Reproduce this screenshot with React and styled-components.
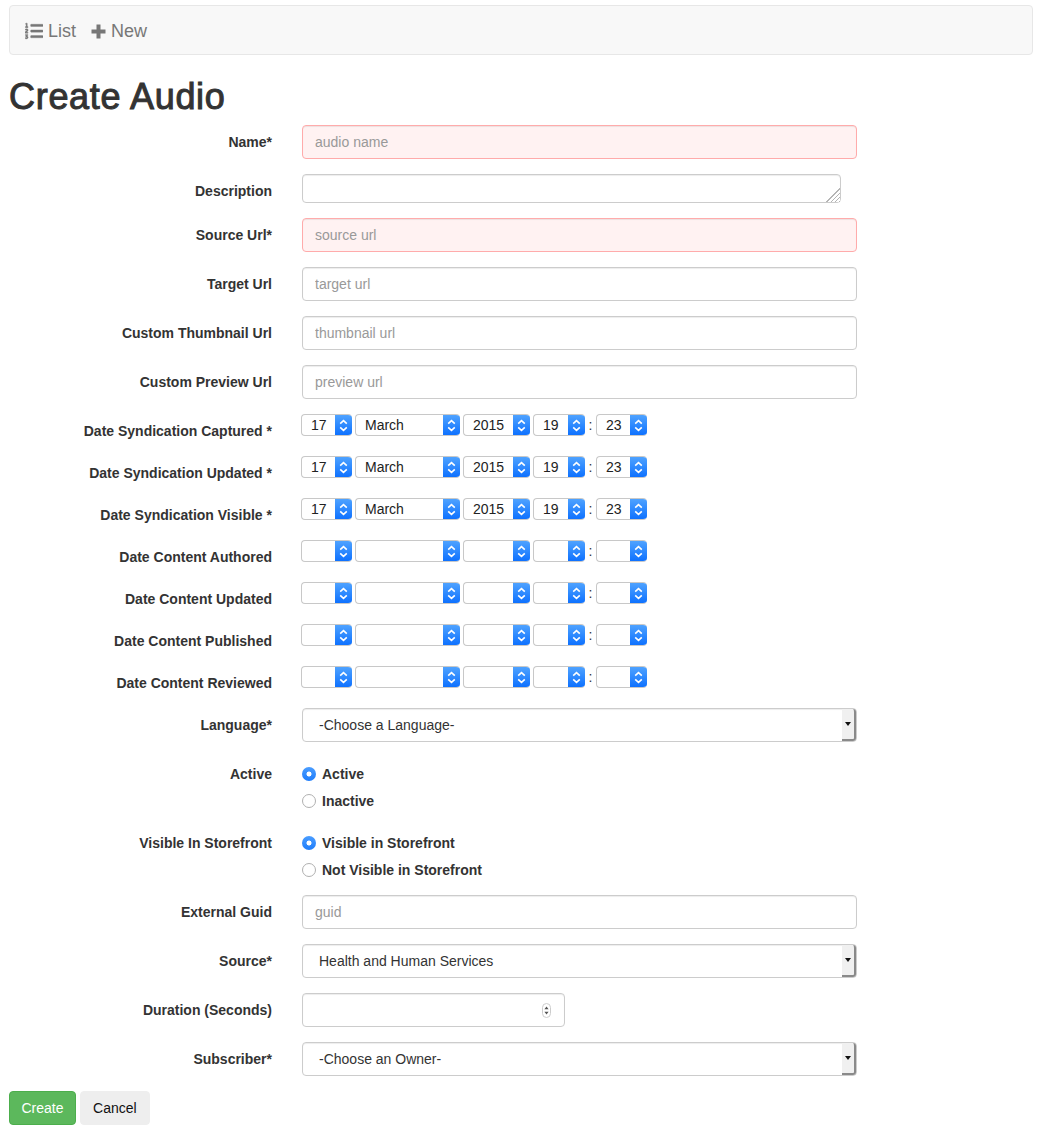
import React from "react";
import styled, { createGlobalStyle } from "styled-components";
import { FaListOl } from "react-icons/fa";

const GlobalStyles = createGlobalStyle`
  html, body { margin: 0; padding: 0; background: #fff; }
  body {
    font-family: "Liberation Sans", Arial, sans-serif;
    font-size: 14px;
    line-height: 20px;
    color: #333;
  }
  * { box-sizing: border-box; }
`;

const Page = styled.div`
  padding: 5px 5px 8px 9px;
`;

const Navbar = styled.nav`
  display: flex;
  align-items: center;
  gap: 15px;
  height: 50px;
  padding: 2px 15px 0;
  background: #f8f8f8;
  border: 1px solid #e7e7e7;
  border-radius: 4px;
`;

const NavLink = styled.a`
  display: flex;
  align-items: center;
  gap: 5px;
  font-size: 18px;
  color: #777;
`;

const Heading = styled.h1`
  margin: 22px 0 8px;
  font-size: 36px;
  line-height: 40px;
  font-weight: 400;
  letter-spacing: 0.7px;
  color: #333;
  -webkit-text-stroke: 1px #333;
`;

const Row = styled.div`
  display: flex;
  gap: 30px;
  margin-bottom: 15px;
`;

const Label = styled.label`
  flex: 0 0 263px;
  padding-top: 7px;
  height: 27px;
  text-align: right;
  font-weight: 700;
`;

const Control = styled.div`
  flex: 0 0 555px;
`;

const TextInput = styled.input`
  display: block;
  width: 100%;
  height: 34px;
  padding: 6px 12px;
  font: inherit;
  color: #555;
  background: ${(p) => (p.$error ? "#fff2f2" : "#fff")};
  border: 1px solid ${(p) => (p.$error ? "#ffabab" : "#ccc")};
  border-radius: 4px;
  box-shadow: inset 0 1px 1px rgba(0, 0, 0, 0.075);
  &::placeholder { color: #999; opacity: 1; }
`;

const TextArea = styled.textarea`
  display: block;
  width: 539px;
  height: 29px;
  padding: 4px 12px;
  font: inherit;
  background: #fff;
  border: 1px solid #ccc;
  border-radius: 4px;
  box-shadow: inset 0 1px 1px rgba(0, 0, 0, 0.075);
  &::-webkit-resizer {
    background: linear-gradient(135deg, #fff 50%, transparent 50%),
      repeating-linear-gradient(-45deg, #b5b5b5 0 1px, #fff 1px 3px);
  }
`;

const DateRowBox = styled.div`
  display: flex;
  align-items: flex-start;
  gap: 3px;
  height: 27px;
  margin-left: -1px;
`;

const MiniSelect = styled.div`
  display: flex;
  width: ${(p) => p.$width}px;
  height: 22px;
  background: #fff;
  border: 1px solid #c8c8c8;
  border-right: 0;
  border-radius: 4px;
  overflow: hidden;
`;

const MiniValue = styled.span`
  flex: 1;
  padding-left: 9px;
  line-height: 20px;
  color: #222;
`;

const MiniArrow = styled.span`
  display: flex;
  align-items: center;
  justify-content: center;
  flex: 0 0 17px;
  margin: -1px 0;
  background: linear-gradient(#52a5ff, #0b6fff);
`;

const Colon = styled.span`
  width: 5px;
  line-height: 22px;
  text-align: center;
  color: #333;
`;

const FakeSelect = styled.div`
  position: relative;
  height: 34px;
  padding: 6px 16px;
  background: #fff;
  border: 1px solid #ccc;
  border-radius: 4px;
  color: #333;
  box-shadow: inset 0 1px 1px rgba(0, 0, 0, 0.075);
`;

const SelectButton = styled.span`
  position: absolute;
  top: 0;
  right: 0;
  bottom: 0;
  width: 14px;
  display: flex;
  align-items: center;
  justify-content: center;
  background: #f0f0f0;
  border-right: 2px solid #8a8a8a;
  border-bottom: 2px solid #8a8a8a;
  border-radius: 0 3px 3px 0;
`;

const Caret = styled.i`
  width: 0;
  height: 0;
  border-left: 3.5px solid transparent;
  border-right: 3.5px solid transparent;
  border-top: 4px solid #111;
`;

const RadioLine = styled.label`
  display: flex;
  align-items: center;
  gap: 6px;
  height: 27px;
  padding-top: 7px;
  font-weight: 700;
`;

const Radio = styled.input`
  appearance: none;
  flex: none;
  width: 14px;
  height: 14px;
  margin: 0;
  border-radius: 50%;
  background: #fff;
  border: 1px solid #b0b0b0;
  &:checked {
    border: 0;
    background: radial-gradient(circle, #fff 0 2.2px, transparent 2.8px),
      linear-gradient(#4a9dff, #1f7dfb);
  }
`;

const NumberField = styled.div`
  display: flex;
  align-items: center;
  justify-content: flex-end;
  width: 263px;
  height: 34px;
  padding-right: 13px;
  background: #fff;
  border: 1px solid #ccc;
  border-radius: 4px;
  box-shadow: inset 0 1px 1px rgba(0, 0, 0, 0.075);
`;

const Actions = styled.div`
  display: flex;
  gap: 4px;
`;

const Button = styled.button`
  height: 34px;
  padding: 0 ${(p) => (p.$primary ? 11.5 : 12)}px;
  font: inherit;
  color: ${(p) => (p.$primary ? "#fff" : "#111")};
  background: ${(p) => (p.$primary ? "#5cb85c" : "#eee")};
  border: 1px solid ${(p) => (p.$primary ? "#4cae4c" : "#eee")};
  border-radius: 4px;
`;

const Chevrons = () => (
  <svg width="9" height="13" viewBox="0 0 9 13" fill="none" stroke="#fff" strokeWidth="1.6">
    <path d="M1.2 4.6 4.5 1.6 7.8 4.6" />
    <path d="M1.2 8.4 4.5 11.4 7.8 8.4" />
  </svg>
);

const Spinner = () => (
  <svg width="9" height="15" viewBox="0 0 9 15">
    <rect x="0.5" y="0.5" width="8" height="14" rx="4" fill="#fff" stroke="#ccc" />
    <path d="M4.5 3.5 6.6 6.2H2.4Z M4.5 11.5 2.4 8.8H6.6Z" fill="#555" />
  </svg>
);

const PlusIcon = () => (
  <svg width="15" height="15" viewBox="0 0 15 15" fill="currentColor">
    <path d="M5.5 0.5h4v5h5v4h-5v5h-4v-5h-5v-4h5z" />
  </svg>
);

const MiniPick = ({ width, value }) => (
  <MiniSelect $width={width}>
    <MiniValue>{value}</MiniValue>
    <MiniArrow>
      <Chevrons />
    </MiniArrow>
  </MiniSelect>
);

const DateRow = ({ label, filled }) => (
  <Row>
    <Label>{label}</Label>
    <Control>
      <DateRowBox>
        <MiniPick width={51} value={filled && "17"} />
        <MiniPick width={105} value={filled && "March"} />
        <MiniPick width={67} value={filled && "2015"} />
        <MiniPick width={52} value={filled && "19"} />
        <Colon>:</Colon>
        <MiniPick width={51} value={filled && "23"} />
      </DateRowBox>
    </Control>
  </Row>
);

const InputRow = ({ label, placeholder, error }) => (
  <Row>
    <Label>{label}</Label>
    <Control>
      <TextInput placeholder={placeholder} $error={error} />
    </Control>
  </Row>
);

const SelectRow = ({ label, value }) => (
  <Row>
    <Label>{label}</Label>
    <Control>
      <FakeSelect>
        {value}
        <SelectButton>
          <Caret />
        </SelectButton>
      </FakeSelect>
    </Control>
  </Row>
);

const RadioRow = ({ label, name, options }) => (
  <Row>
    <Label>{label}</Label>
    <Control>
      {options.map((o, i) => (
        <RadioLine key={o}>
          <Radio type="radio" name={name} defaultChecked={i === 0} />
          {o}
        </RadioLine>
      ))}
    </Control>
  </Row>
);

const dates = [
  ["Date Syndication Captured *", true],
  ["Date Syndication Updated *", true],
  ["Date Syndication Visible *", true],
  ["Date Content Authored", false],
  ["Date Content Updated", false],
  ["Date Content Published", false],
  ["Date Content Reviewed", false],
];

function App() {
  return (
    <Page>
      <GlobalStyles />
      <Navbar>
        <NavLink>
          <FaListOl size={18} stroke="currentColor" strokeWidth={10} />
          List
        </NavLink>
        <NavLink>
          <PlusIcon />
          New
        </NavLink>
      </Navbar>
      <Heading>Create Audio</Heading>
      <InputRow label="Name*" placeholder="audio name" error />
      <Row>
        <Label>Description</Label>
        <Control>
          <TextArea />
        </Control>
      </Row>
      <InputRow label="Source Url*" placeholder="source url" error />
      <InputRow label="Target Url" placeholder="target url" />
      <InputRow label="Custom Thumbnail Url" placeholder="thumbnail url" />
      <InputRow label="Custom Preview Url" placeholder="preview url" />
      {dates.map(([label, filled]) => (
        <DateRow key={label} label={label} filled={filled} />
      ))}
      <SelectRow label="Language*" value="-Choose a Language-" />
      <RadioRow label="Active" name="active" options={["Active", "Inactive"]} />
      <RadioRow
        label="Visible In Storefront"
        name="storefront"
        options={["Visible in Storefront", "Not Visible in Storefront"]}
      />
      <InputRow label="External Guid" placeholder="guid" />
      <SelectRow label="Source*" value="Health and Human Services" />
      <Row>
        <Label>Duration (Seconds)</Label>
        <Control>
          <NumberField>
            <Spinner />
          </NumberField>
        </Control>
      </Row>
      <SelectRow label="Subscriber*" value="-Choose an Owner-" />
      <Actions>
        <Button $primary>Create</Button>
        <Button>Cancel</Button>
      </Actions>
    </Page>
  );
}

export default App;
